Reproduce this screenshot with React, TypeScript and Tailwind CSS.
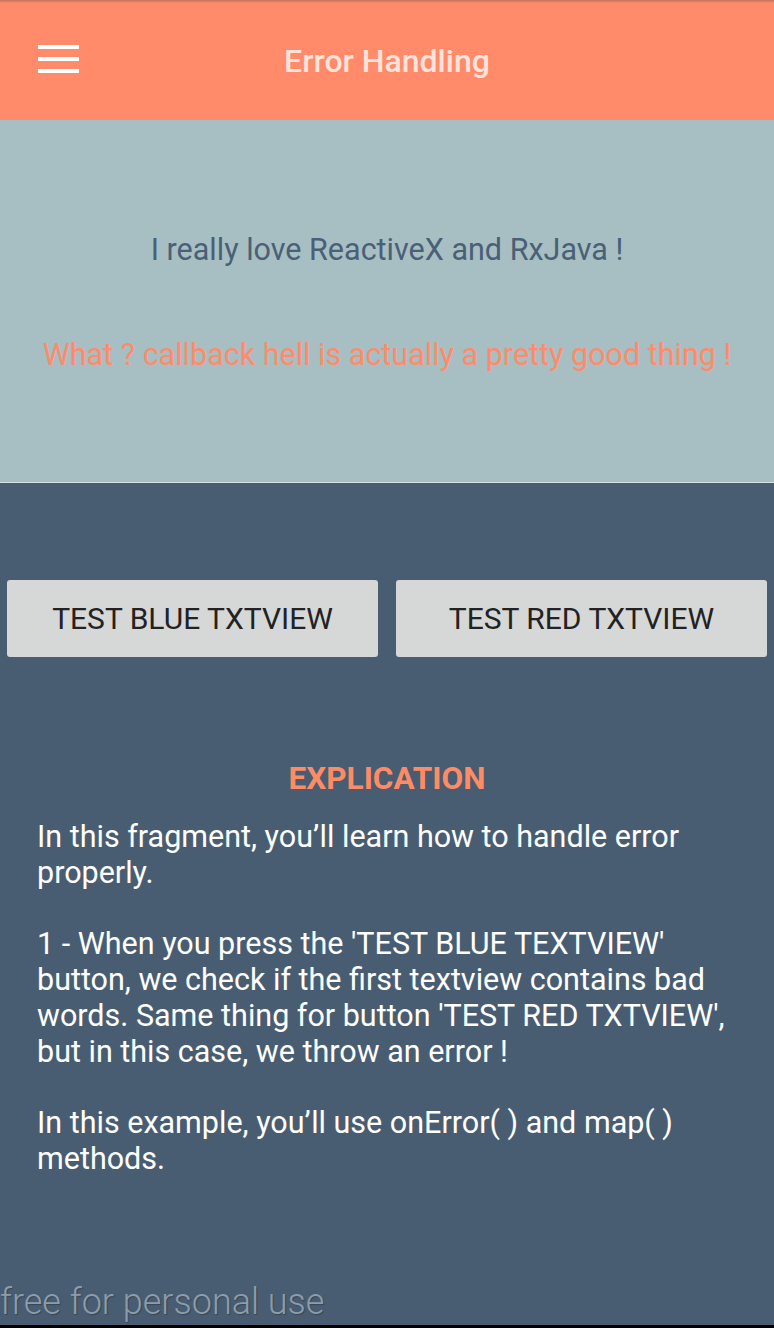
import React from "react";

export default function App() {
  const font = { fontFamily: "Roboto, 'Noto Sans', sans-serif" };
  return (
    <div className="w-[774px] h-[1328px] flex flex-col bg-[#485d72] overflow-hidden" style={font}>
      <header className="relative h-[120px] shrink-0 bg-[#ff8b6a] flex items-center justify-center">
        <div className="absolute top-0 left-0 right-0 h-[3px] bg-gradient-to-b from-[#c4705a] to-[#ff8b6a]" />
        <div className="absolute left-[38px] top-[45px] flex flex-col gap-[8px]">
          <span className="block w-[41px] h-[4px] bg-white" />
          <span className="block w-[41px] h-[4px] bg-white" />
          <span className="block w-[41px] h-[4px] bg-white" />
        </div>
        <h1 className="mt-[2px] text-[32px] font-medium text-[#ffe3da] leading-none">Error Handling</h1>
      </header>

      <section className="h-[363px] shrink-0 bg-[#a7bfc3] flex flex-col items-center pt-[112px] gap-[69px] border-b border-[#d9e3e5]">
        <p className="text-[30.5px] leading-[36px] text-[#4a6076]">I really love ReactiveX and RxJava !</p>
        <p className="text-[30.5px] leading-[36px] text-[#ff8b6a]">What ? callback hell is actually a pretty good thing !</p>
      </section>

      <main className="flex-1 flex flex-col">
        <div className="flex gap-[18px] px-[7px] pt-[97px]">
          <button className="flex-1 h-[77px] rounded-[3px] bg-[#d6d7d7] text-[#222222] text-[30px]">TEST BLUE TXTVIEW</button>
          <button className="flex-1 h-[77px] rounded-[3px] bg-[#d6d7d7] text-[#222222] text-[30px]">TEST RED TXTVIEW</button>
        </div>

        <h2 className="mt-[102px] text-center text-[31.5px] font-bold text-[#ff8b65] leading-[40px]">EXPLICATION</h2>
        <div className="px-[37px] mt-[20px] text-white text-[30.5px] leading-[35.8px] whitespace-nowrap">
          <p>In this fragment, you’ll learn how to handle error<br />properly.</p>
          <p className="mt-[35.8px]">1 - When you press the 'TEST BLUE TEXTVIEW'<br />button, we check if the first textview contains bad<br />words. Same thing for button 'TEST RED TXTVIEW',<br />but in this case, we throw an error !</p>
          <p className="mt-[35.8px]">In this example, you’ll use onError( ) and map( )<br />methods.</p>
        </div>

        <div className="mt-auto pb-[5px] text-[36px] font-light leading-none text-[#8d9cab] [text-shadow:1px_1px_1px_rgba(0,0,0,0.25)]">free for personal use</div>
      </main>
      <div className="h-[3px] shrink-0 bg-black" />
    </div>
  );
}
